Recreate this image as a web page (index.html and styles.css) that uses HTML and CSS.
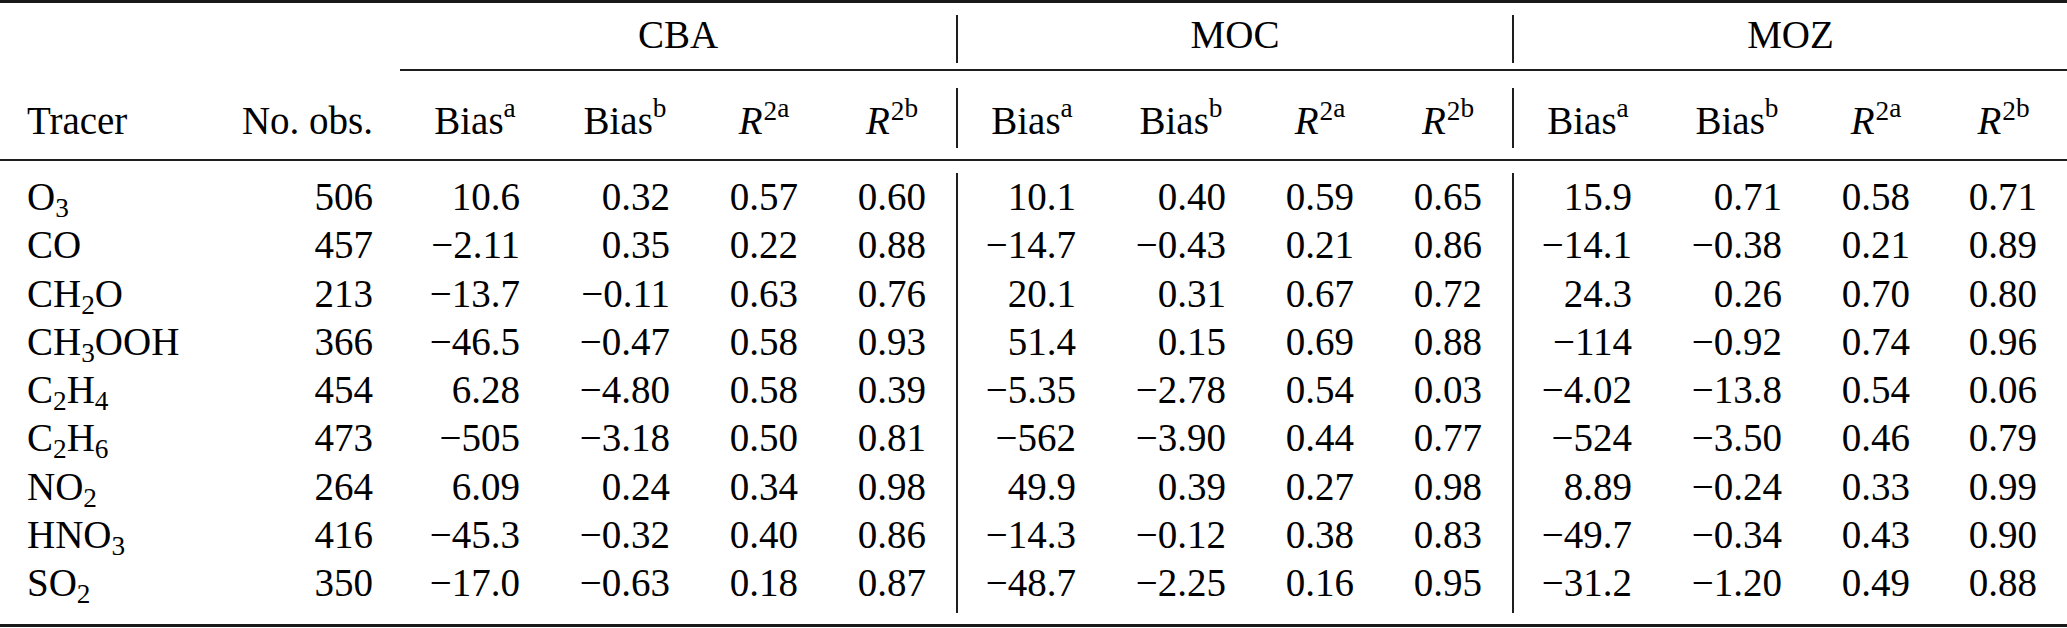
FILE: index.html
```html
<!DOCTYPE html>
<html lang="en">
<head>
<meta charset="utf-8">
<title>Tracer statistics</title>
<link rel="stylesheet" href="styles.css">
</head>
<body>
<div class="table">
  <div class="toprule"></div>

  <div class="grid grouprow">
    <div class="gcell span2"></div>
    <div class="gcell span4">CBA</div>
    <div class="gcell span4 sep">MOC</div>
    <div class="gcell span4 sep">MOZ</div>
  </div>

  <div class="grid cmid"><div class="cline"></div></div>

  <div class="grid headrow">
    <div class="hcell l">Tracer</div>
    <div class="hcell r0">No. obs.</div>
    <div class="hcell c">Bias<span class="sup">a</span></div>
    <div class="hcell c">Bias<span class="sup">b</span></div>
    <div class="hcell c"><span class="it">R</span><span class="sup2">2</span><span class="sup">a</span></div>
    <div class="hcell c"><span class="it">R</span><span class="sup2">2</span><span class="sup">b</span></div>
    <div class="hcell c sep">Bias<span class="sup">a</span></div>
    <div class="hcell c">Bias<span class="sup">b</span></div>
    <div class="hcell c"><span class="it">R</span><span class="sup2">2</span><span class="sup">a</span></div>
    <div class="hcell c"><span class="it">R</span><span class="sup2">2</span><span class="sup">b</span></div>
    <div class="hcell c sep">Bias<span class="sup">a</span></div>
    <div class="hcell c">Bias<span class="sup">b</span></div>
    <div class="hcell c"><span class="it">R</span><span class="sup2">2</span><span class="sup">a</span></div>
    <div class="hcell c"><span class="it">R</span><span class="sup2">2</span><span class="sup">b</span></div>
  </div>

  <div class="midrule"></div>

  <div class="tbody">
    <div class="grid row">
      <div class="cell l">O<span class="sub">3</span></div><div class="cell r0">506</div>
      <div class="cell r">10.6</div><div class="cell r">0.32</div><div class="cell r">0.57</div><div class="cell r">0.60</div>
      <div class="cell r sep">10.1</div><div class="cell r">0.40</div><div class="cell r">0.59</div><div class="cell r">0.65</div>
      <div class="cell r sep">15.9</div><div class="cell r">0.71</div><div class="cell r">0.58</div><div class="cell r">0.71</div>
    </div>
    <div class="grid row">
      <div class="cell l">CO</div><div class="cell r0">457</div>
      <div class="cell r">−2.11</div><div class="cell r">0.35</div><div class="cell r">0.22</div><div class="cell r">0.88</div>
      <div class="cell r sep">−14.7</div><div class="cell r">−0.43</div><div class="cell r">0.21</div><div class="cell r">0.86</div>
      <div class="cell r sep">−14.1</div><div class="cell r">−0.38</div><div class="cell r">0.21</div><div class="cell r">0.89</div>
    </div>
    <div class="grid row">
      <div class="cell l">CH<span class="sub">2</span>O</div><div class="cell r0">213</div>
      <div class="cell r">−13.7</div><div class="cell r">−0.11</div><div class="cell r">0.63</div><div class="cell r">0.76</div>
      <div class="cell r sep">20.1</div><div class="cell r">0.31</div><div class="cell r">0.67</div><div class="cell r">0.72</div>
      <div class="cell r sep">24.3</div><div class="cell r">0.26</div><div class="cell r">0.70</div><div class="cell r">0.80</div>
    </div>
    <div class="grid row">
      <div class="cell l">CH<span class="sub">3</span>OOH</div><div class="cell r0">366</div>
      <div class="cell r">−46.5</div><div class="cell r">−0.47</div><div class="cell r">0.58</div><div class="cell r">0.93</div>
      <div class="cell r sep">51.4</div><div class="cell r">0.15</div><div class="cell r">0.69</div><div class="cell r">0.88</div>
      <div class="cell r sep">−114</div><div class="cell r">−0.92</div><div class="cell r">0.74</div><div class="cell r">0.96</div>
    </div>
    <div class="grid row">
      <div class="cell l">C<span class="sub">2</span>H<span class="sub">4</span></div><div class="cell r0">454</div>
      <div class="cell r">6.28</div><div class="cell r">−4.80</div><div class="cell r">0.58</div><div class="cell r">0.39</div>
      <div class="cell r sep">−5.35</div><div class="cell r">−2.78</div><div class="cell r">0.54</div><div class="cell r">0.03</div>
      <div class="cell r sep">−4.02</div><div class="cell r">−13.8</div><div class="cell r">0.54</div><div class="cell r">0.06</div>
    </div>
    <div class="grid row">
      <div class="cell l">C<span class="sub">2</span>H<span class="sub">6</span></div><div class="cell r0">473</div>
      <div class="cell r">−505</div><div class="cell r">−3.18</div><div class="cell r">0.50</div><div class="cell r">0.81</div>
      <div class="cell r sep">−562</div><div class="cell r">−3.90</div><div class="cell r">0.44</div><div class="cell r">0.77</div>
      <div class="cell r sep">−524</div><div class="cell r">−3.50</div><div class="cell r">0.46</div><div class="cell r">0.79</div>
    </div>
    <div class="grid row">
      <div class="cell l">NO<span class="sub">2</span></div><div class="cell r0">264</div>
      <div class="cell r">6.09</div><div class="cell r">0.24</div><div class="cell r">0.34</div><div class="cell r">0.98</div>
      <div class="cell r sep">49.9</div><div class="cell r">0.39</div><div class="cell r">0.27</div><div class="cell r">0.98</div>
      <div class="cell r sep">8.89</div><div class="cell r">−0.24</div><div class="cell r">0.33</div><div class="cell r">0.99</div>
    </div>
    <div class="grid row">
      <div class="cell l">HNO<span class="sub">3</span></div><div class="cell r0">416</div>
      <div class="cell r">−45.3</div><div class="cell r">−0.32</div><div class="cell r">0.40</div><div class="cell r">0.86</div>
      <div class="cell r sep">−14.3</div><div class="cell r">−0.12</div><div class="cell r">0.38</div><div class="cell r">0.83</div>
      <div class="cell r sep">−49.7</div><div class="cell r">−0.34</div><div class="cell r">0.43</div><div class="cell r">0.90</div>
    </div>
    <div class="grid row last">
      <div class="cell l">SO<span class="sub">2</span></div><div class="cell r0">350</div>
      <div class="cell r">−17.0</div><div class="cell r">−0.63</div><div class="cell r">0.18</div><div class="cell r">0.87</div>
      <div class="cell r sep">−48.7</div><div class="cell r">−2.25</div><div class="cell r">0.16</div><div class="cell r">0.95</div>
      <div class="cell r sep">−31.2</div><div class="cell r">−1.20</div><div class="cell r">0.49</div><div class="cell r">0.88</div>
    </div>
  </div>

  <div class="bottomrule"></div>
</div>
</body>
</html>
```

FILE: styles.css
```css
html, body {
  margin: 0;
  padding: 0;
  background: #ffffff;
}

body {
  font-family: "Liberation Serif", "Times New Roman", serif;
  font-size: 39px;
  color: #000000;
}

.table {
  width: 2067px;
}

.grid {
  display: grid;
  grid-template-columns: 209px 191px 150px 150px 128px 128px 150px 150px 128px 128px 150px 150px 128px 127px;
}

.toprule {
  height: 3px;
  background: #1a1a1a;
}

.bottomrule {
  height: 3px;
  background: #1a1a1a;
}

.midrule {
  height: 2px;
  background: #1e1e1e;
}

/* group header row */
.grouprow {
  padding: 12px 0 6px;
}

.gcell {
  box-sizing: border-box;
  height: 48px;
  line-height: 40px;
  padding-bottom: 8px;
  text-align: center;
  white-space: nowrap;
}

.span2 { grid-column: span 2; }
.span4 { grid-column: span 4; }

.sep {
  border-left: 2px solid #1e1e1e;
}

/* cmidrule */
.cmid {
  height: 2px;
}

.cline {
  grid-column: 3 / -1;
  background: #1e1e1e;
}

/* column header row */
.headrow {
  padding: 17px 0 11px;
}

.hcell {
  box-sizing: border-box;
  height: 60px;
  padding-top: 9px;
  line-height: 48.3px;
  white-space: nowrap;
}

/* body */
.tbody {
  padding: 12px 0 11px;
}

.cell {
  box-sizing: border-box;
  line-height: 48.3px;
  white-space: nowrap;
}

.row.last .cell {
  padding-bottom: 5.3px;
}

/* alignments */
.l {
  text-align: left;
  padding-left: 27px;
}

.r0 {
  text-align: right;
  padding-right: 27px;
}

.r {
  text-align: right;
  padding-right: 30px;
}

.c {
  text-align: center;
}

/* typography helpers */
.it {
  font-style: italic;
}

.sub {
  font-size: 0.7em;
  line-height: 0;
  vertical-align: -0.27em;
}

.sup {
  font-size: 0.7em;
  line-height: 0;
  vertical-align: 0.62em;
}

.sup2 {
  font-size: 0.7em;
  line-height: 0;
  vertical-align: 0.52em;
  margin-left: 1px;
}
```
